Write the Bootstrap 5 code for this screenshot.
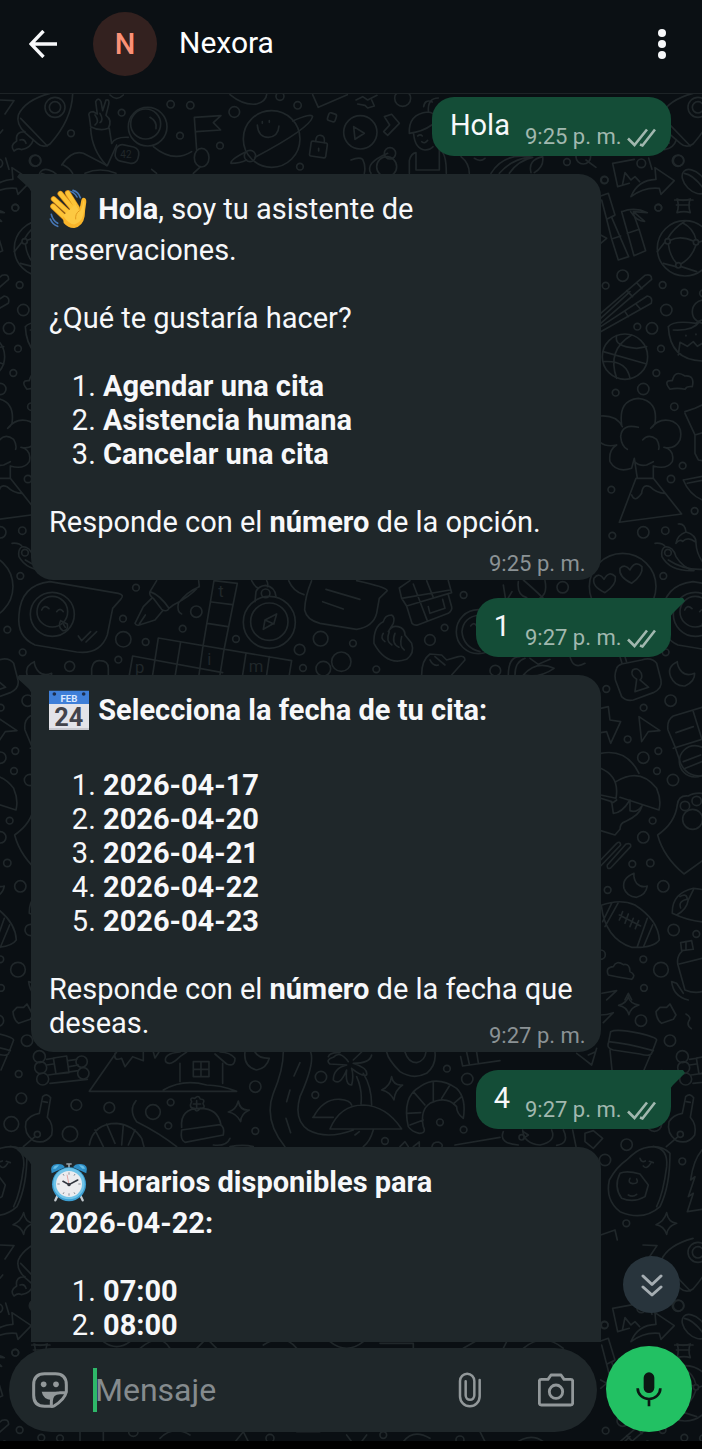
<!DOCTYPE html>
<html lang="es" data-bs-theme="dark">
<head>
<meta charset="utf-8">
<meta name="viewport" content="width=device-width, initial-scale=1">
<title>Nexora</title>
<link href="https://cdn.jsdelivr.net/npm/bootstrap@5.3.0/dist/css/bootstrap.min.css" rel="stylesheet">
<style>
  :root { --night:#0a0f13; --panel:#1f272a; --sent:#144d37; --ink:#f7f8fa; --muted:#8b9295; }
  body { font-family:Roboto,"Liberation Sans",sans-serif; font-size:29px; line-height:34px; color:var(--ink); background:var(--night); }
  .screen { min-height:100vh; isolation:isolate; }
  .wallpaper { inset:0; z-index:-1; width:100%; height:100%; fill:none; stroke:#20272a; stroke-width:5; stroke-linecap:round; stroke-linejoin:round; }
  .wallpaper text { font-family:Roboto,sans-serif; font-size:50px; fill:#20272a; stroke:none; }
  .wallpaper .patch-label { font-size:30px; }
  .topbar { background:#0b1014; border-bottom:1px solid #1d2326; padding:12px 30px 17px 29px; }
  .contact { font-size:30px; line-height:34px; font-weight:400; margin:0 0 2px; }
  .icon-btn { background:none; border:0; padding:0; color:inherit; line-height:0; flex:none; }
  .avatar { width:64px; height:64px; background:#33211f; color:#fb9176; font-size:29px; font-weight:500; margin:0 22px 0 36px; }
  .chat { padding:3px 31px 0; gap:18px; }
  .bubble { border-radius:22px; position:relative; }
  .received { background:var(--panel); width:89%; padding:15px 15px 3px 18px; }
  .sent { background:var(--sent); padding:11px 15px 6px 18px; gap:15px; }
  .tailed-start { border-top-left-radius:0; }
  .tailed-start::before { content:""; position:absolute; top:0; left:-14px; width:15px; height:19px; background:var(--panel); clip-path:polygon(2px 0,100% 0,100% 100%,12px 14px,0 3px); }
  .tailed-end { border-top-right-radius:0; }
  .tailed-end::after { content:""; position:absolute; top:0; right:-14px; width:15px; height:19px; background:var(--sent); clip-path:polygon(0 0,13px 0,15px 3px,3px 15px,0 19px); }
  .para { margin-bottom:34px; }
  .options { padding-left:54px; margin-bottom:34px; }
  .emoji { width:40px; height:40px; vertical-align:-14px; margin:0 2px 4px 0; overflow:visible; }
  .stamp { font-size:22px; line-height:26px; color:var(--muted); display:block; text-align:right; }
  .stamp-below { margin-top:12px; }
  .stamp-beside { margin-top:-17px; }
  .sent .stamp { color:#a1b8af; white-space:nowrap; padding-top:16px; }
  strong { font-weight:700; }
  .jump { right:22px; bottom:29px; width:57px; height:57px; background:#28343c; color:#a5adb2; }
  .composer { padding:4px 10px 17px 9px; gap:9px; position:relative; }
  .composer::after { content:""; position:absolute; left:0; right:0; bottom:0; height:8px; background:#000; }
  .field { background:var(--panel); height:84px; padding:0 23px; color:#92989a; min-width:0; }
  .field input { background:none; border:0; border-left:4px solid #2eb869; outline:0; height:44px; font-size:32px; line-height:44px; padding:0; flex:1 1 0; width:0; margin:0 20px 0 25px; color:var(--ink); text-indent:-2px; }
  .field input::placeholder { color:#858b8e; opacity:1; }
  .mic { width:86px; height:86px; background:#22c163; color:#0b1713; }
</style>
</head>
<body>
<div class="screen d-flex flex-column position-relative overflow-hidden">

  <svg class="wallpaper position-absolute" aria-hidden="true">
    <defs>
      <g id="doodles">
        <!-- space -->
        <g transform="scale(.3333)">
          <path d="M150 280Q75 300 55 345Q48 372 75 398L112 430Q130 446 150 432Q215 360 218 282M62 355L142 438M75 395q-30 0-25 28q-22 14-8 30q12-10 22-4q28-4 36-30M60 420q14-4 18 10"/>
          <circle cx="165" cy="322" r="30"/><circle cx="165" cy="322" r="17"/>
          <path d="M0 300L42 302L15 342M0 400L8 390"/>
          <path d="M268 350Q262 335 280 335L292 342L287 305Q295 290 303 305L308 332L318 300Q330 297 326 314L318 346Q338 360 325 385Q300 395 272 380ZM272 385Q275 450 320 497M328 385L335 430M285 345q15 20 0 30M300 340q12 20 0 28"/>
          <circle cx="443" cy="380" r="58"/><circle cx="437" cy="372" r="45"/><path d="M450 352q22 12 18 34"/>
          <path d="M335 430Q345 410 385 412M460 440Q520 490 575 455M185 495Q215 450 250 460L322 497L350 435M190 495Q210 505 218 520M255 520Q300 500 348 520"/>
          <rect x="346" y="437" width="70" height="50" rx="20" transform="rotate(12 380 462)"/><text class="patch-label" x="361" y="474">42</text>
          <path d="M590 450L583 352L663 347L640 368L662 390L588 395M580 520L602 500M455 508L470 520"/><ellipse cx="605" cy="473" rx="22" ry="28"/>
          <circle cx="815" cy="417" r="85"/><path d="M772 375Q775 412 805 412Q835 410 837 378M787 365v5M808 362v5M878 363Q935 338 938 350Q930 385 765 472M735 457Q690 480 693 490Q720 490 740 480"/><circle cx="750" cy="468" r="17"/>
          <rect x="931" y="426" width="49" height="45" rx="5" transform="rotate(8 955 448)"/><path d="M947 424Q948 404 962 406Q976 408 973 428M956 445v8"/>
          <rect x="984" y="340" width="24" height="24" rx="6" transform="rotate(18 996 352)"/>
          <path d="M690 284Q730 317 770 312Q798 304 800 284M938 284L955 322L1042 284M330 285q20 20 40 0"/>
          <circle cx="365" cy="338" r="10"/><circle cx="512" cy="313" r="11"/><circle cx="571" cy="316" r="11"/><circle cx="703" cy="336" r="16"/><circle cx="840" cy="289" r="12"/><circle cx="893" cy="316" r="11"/><circle cx="540" cy="407" r="10"/><circle cx="660" cy="437" r="10"/><circle cx="213" cy="400" r="10"/><circle cx="105" cy="482" r="17"/><circle cx="900" cy="500" r="10"/>
        </g>
        <g transform="translate(351 0) scale(.3333)">
          <circle cx="28" cy="397" r="50"/><path d="M8 380L40 400L12 418ZM15 300L35 290L50 300L78 286M20 312L42 316L50 324L70 318L62 300M100 350L122 343L145 370L110 406L98 395L116 375Z"/>
          <path d="M175 400Q172 342 230 336Q250 338 252 350M175 400Q215 395 242 375M188 402Q192 446 222 450Q240 448 246 440M200 408q8-6 14 0M212 425q10 8 18-4M195 460V510H265V450M175 520V482Q180 460 195 458M265 450Q286 455 286 520M218 320q4-24 26-14M232 334q-2-40 30-40M60 520q-20-30 50-60"/>
          <circle cx="107" cy="500" r="30"/><circle cx="117" cy="460" r="17"/><circle cx="155" cy="295" r="24"/>
          <path d="M0 480q25-10 35-2q10 20 5 42M420 520Q460 455 545 472Q500 482 475 520M445 520Q480 480 530 472M540 518Q530 480 575 470Q580 500 550 518M370 475q18 12 32 0M330 470q25 20 25 50M705 480L735 502"/>
          <circle cx="697" cy="470" r="22"/><circle cx="648" cy="486" r="10"/><circle cx="760" cy="540" r="11"/><circle cx="983" cy="482" r="16"/><circle cx="871" cy="490" r="13"/><circle cx="922" cy="623" r="10"/>
          <path d="M835 550L800 560L785 490L850 478M893 474L903 508M815 552L822 518L840 540L852 530L866 545M840 590Q860 540 915 538L912 503L970 542L930 583L925 565Q880 560 840 590ZM978 597Q995 605 1018 597Q1010 615 1018 638Q1000 632 978 638Q986 615 978 597Z"/>
          <ellipse cx="1030" cy="545" rx="44" ry="27" transform="rotate(45 1030 545)"/><path d="M1000 520q30 5 60 50"/>
        </g>
        <!-- right column, upper -->
        <g transform="translate(440 160) scale(.3333)">
          <path d="M482 108L505 100L525 165L515 172L540 230L566 290L535 300L515 237L500 178L485 120M500 178L525 165M515 237L542 228M482 225l18 10l-18 15M545 155L562 215L582 287L617 272L598 210L580 160M562 220L598 208M545 155Q585 140 622 158L580 155L614 184Q590 184 572 155"/>
          <circle cx="735" cy="265" r="83"/><circle cx="683" cy="244" r="8"/><circle cx="768" cy="247" r="8"/><circle cx="715" cy="316" r="8"/><path d="M691 241Q720 225 760 243M685 252Q690 290 710 310M722 312Q755 295 768 255M683 236Q700 205 735 184M675 246L652 275M708 320L670 310M724 320L770 335M768 239Q760 205 730 190M776 247L810 235"/>
          <path d="M482 460L615 346Q635 340 635 358L482 490M482 475L570 395M560 392L578 410M590 368L606 386M482 500L622 408Q640 412 634 430L482 515M555 455L565 470M588 432L602 448"/>
          <circle cx="555" cy="590" r="68"/><path d="M490 575L620 612M530 527Q520 560 590 565L620 560M575 525Q500 570 530 655M490 605Q560 600 570 655"/>
          <path d="M685 500Q690 600 786 603Q880 595 880 500M685 500Q700 480 768 490Q775 482 786 480Q870 480 880 500M715 585l5-38l22 12l18-14l12 14l20-12M700 510q60 4 80-26M738 526v2M768 522v2"/><circle cx="792" cy="455" r="35"/>
          <path d="M690 688Q668 660 697 662Q705 628 735 648Q765 645 757 680Q740 678 735 688Q712 682 690 688Z"/>
          <path d="M545 795Q535 720 595 715Q655 722 645 790Q640 800 632 805Q660 770 700 785Q730 800 720 840Q705 870 672 862Q705 870 697 905Q680 930 640 918L640 955M547 800Q530 765 482 768M482 848Q500 862 530 855Q505 870 510 905Q530 940 575 925L583 895L592 955M595 802Q545 790 542 830Q545 860 562 868M608 840Q625 820 650 838Q660 855 656 868M583 905Q600 920 620 915L640 905M588 955H640L725 1062L538 1087ZM575 1005Q585 1030 605 1000Q608 970 630 980Q650 1000 675 1000"/>
          <path d="M735 755L765 745L786 735M735 760L765 825L765 880L775 900L800 905M765 825l35-10M730 960L860 935Q870 1010 800 1025Q750 1010 730 960M742 970L850 948M645 1150Q668 1148 676 1160Q700 1160 708 1190Q730 1225 762 1232Q690 1235 666 1190Q662 1168 676 1160M708 1150Q712 1125 738 1116Q735 1090 715 1092M738 1116Q770 1125 768 1150Q770 1190 800 1220M708 1150q12-14 20-6q16-16 38 2"/><circle cx="684" cy="1178" r="10"/>
          <circle cx="548" cy="1280" r="100"/><path d="M495 1298Q455 1280 462 1255Q478 1235 492 1258Q508 1230 526 1250Q530 1275 495 1298ZM575 1270Q535 1250 540 1225Q555 1210 570 1230Q585 1200 606 1220Q610 1245 575 1270Z"/>
          <circle cx="548" cy="347" r="17"/><circle cx="668" cy="375" r="10"/><circle cx="733" cy="398" r="10"/><circle cx="497" cy="377" r="10"/><circle cx="679" cy="450" r="17"/><circle cx="592" cy="500" r="10"/><circle cx="636" cy="505" r="17"/><circle cx="663" cy="566" r="10"/><circle cx="649" cy="639" r="10"/><circle cx="610" cy="687" r="17"/><circle cx="527" cy="698" r="10"/><circle cx="703" cy="740" r="11"/><circle cx="728" cy="917" r="10"/><circle cx="693" cy="957" r="11"/><circle cx="514" cy="989" r="10"/><circle cx="764" cy="1053" r="10"/><circle cx="610" cy="1117" r="17"/><circle cx="676" cy="1112" r="11"/><circle cx="517" cy="1127" r="10"/><circle cx="670" cy="1248" r="10"/><circle cx="368" cy="1282" r="17"/><circle cx="494" cy="60" r="10"/><circle cx="655" cy="143" r="10"/>
        </g>
        <!-- strip below the first reply -->
        <g transform="translate(0 560) scale(.3333)">
          <circle cx="157" cy="163" r="66"/><circle cx="157" cy="155" r="46"/>
          <path d="M150 65L355 100Q375 105 362 118L338 145L322 225Q300 285 230 276L105 255Q50 230 57 165Q62 75 150 65M125 150q8-18 22-4M170 155q10-14 20 0M182 182l20 10q4 22-14 20q-16-12-6-30M190 192l6 10M235 228L245 242L272 215M258 246L290 215"/>
          <path d="M470 62L450 95Q446 105 460 115L485 148Q500 158 507 145L520 135Q570 110 598 78L596 62M450 95Q480 105 507 145M455 115L430 140L405 190Q408 198 418 195L465 180L488 152M418 192L436 165M598 80Q560 95 535 130Q530 155 545 162"/>
          <path d="M642 62L608 265L597 345M712 70L672 270L660 345M642 62L712 70M635 126L697 134M622 190L684 200M475 234L875 302L868 345M475 234L458 345M398 288L668 338M542 246L526 345M738 280L728 345M808 290L800 345M398 288L388 345"/>
          <text x="655" y="112">t</text><text x="405" y="338">p</text><text x="622" y="315">i</text><text x="746" y="335">m</text>
          <circle cx="808" cy="187" r="78"/><circle cx="808" cy="185" r="56"/><circle cx="797" cy="100" r="13"/><path d="M765 125L768 95Q775 78 797 76Q825 80 828 110M755 62q10 20 20 22M800 62q6 10 2 18M790 208L795 180L830 162L822 190ZM795 180L822 192"/>
          <path d="M935 62Q915 110 914 150Q920 180 960 190L1070 208Q1120 200 1130 160L1138 115L1162 92Q1160 82 1070 62M978 88L1080 118M968 125L1030 147M866 62Q880 95 912 104"/>
          <path d="M1198 84L1230 62M1198 84L1205 115L1220 138L1355 98L1345 62M1205 115L1350 90M1220 138L1236 190Q1245 198 1255 194L1345 160Q1358 150 1355 140L1345 104M1240 72L1262 130L1282 182M1280 62L1300 112M1285 140L1290 160L1335 145L1328 118"/>
          <path d="M1122 250Q1120 200 1150 185Q1155 165 1175 165Q1186 172 1180 190L1165 215Q1175 195 1195 200Q1215 205 1215 225L1235 250Q1245 280 1220 298Q1160 320 1122 250M1150 220q-10 15 5 25M1168 215q-12 30 8 40M1185 220q-12 30 12 42M1205 230q-8 30 8 40M1265 345Q1265 300 1290 282L1325 285L1340 300L1375 290Q1395 285 1395 300L1355 345M1290 300q10 20 25 15M1305 290l30 25"/>
          <circle cx="1435" cy="215" r="66"/><path d="M1440 165Q1390 170 1386 215Q1390 262 1440 275M1412 198q10-14 18 0M275 345V325Q280 300 300 302Q325 302 325 325V345"/>
          <circle cx="408" cy="83" r="10"/><circle cx="589" cy="155" r="17"/><circle cx="369" cy="176" r="10"/><circle cx="548" cy="206" r="10"/><circle cx="370" cy="238" r="23"/><circle cx="437" cy="246" r="10"/><circle cx="708" cy="237" r="10"/><circle cx="962" cy="236" r="22"/><circle cx="1059" cy="250" r="10"/><circle cx="899" cy="269" r="16"/><circle cx="1024" cy="305" r="29"/><circle cx="970" cy="326" r="22"/><circle cx="909" cy="324" r="10"/><circle cx="1129" cy="328" r="10"/><circle cx="1290" cy="240" r="16"/><circle cx="1334" cy="203" r="10"/><circle cx="1391" cy="105" r="10"/><circle cx="355" cy="299" r="10"/><circle cx="209" cy="319" r="15"/><circle cx="68" cy="277" r="10"/><circle cx="22" cy="209" r="10"/>
        </g>
        <!-- right column, middle -->
        <g transform="translate(440 560) scale(.3333)">
          <path d="M685 0Q730 30 786 28M190 75l8 50l18-30M235 65q-5 40 25 48M250 60q35 30 60 55M315 62q8 40-15 52M205 345Q205 290 240 290M225 345q0-40 30-50M250 345Q290 300 342 325Q300 355 250 345M270 295l25 18l35-15M390 290Q400 330 435 310M540 290l6 20M555 290l5 16"/>
          <path d="M530 325Q520 350 530 370L545 410Q560 425 580 420L640 398Q668 385 663 360L650 310Q635 290 605 300L545 312Q532 318 530 325ZM585 395L590 358Q570 345 578 330Q595 320 604 340Q608 355 600 360L626 382Z"/>
          <path d="M712 305Q680 320 692 350Q705 380 735 378Q765 365 764 340Q740 350 725 335Q712 320 712 305ZM482 445L505 440L510 480L542 485L512 550L500 515L482 518M597 470L660 512L625 515L605 545Z"/>
          <path d="M786 442L700 468Q680 480 684 510L705 560L722 610Q740 650 786 648M700 565L786 538M760 455L785 535M708 518L760 500M730 605L782 585M736 625L786 605"/><circle cx="765" cy="604" r="47"/>
          <path d="M482 580Q560 565 597 640M482 625Q540 650 528 715L482 705M528 665Q600 620 650 685Q665 720 657 750L540 712M482 715L515 725L520 760Q545 760 570 720M570 725L570 752Q590 760 606 738M530 720Q510 735 515 725M606 738Q600 765 555 785Q540 790 540 808L525 825L482 812"/>
          <path d="M482 900L530 850Q540 842 542 855L482 918M502 915L558 852Q575 848 572 860L512 924Q500 930 502 915Z"/>
          <path d="M712 735Q715 705 745 708Q760 698 786 700Q840 720 850 780Q860 840 790 900L732 942Q670 890 653 825Q705 790 712 735Z"/><circle cx="735" cy="738" r="14"/><circle cx="770" cy="723" r="14"/><circle cx="758" cy="778" r="30"/>
          <path d="M582 940Q545 955 552 985Q560 1010 590 1012Q618 1005 622 978Q605 985 590 970Q580 955 582 940ZM484 1036Q540 1015 585 1035Q655 1080 658 1140Q640 1165 575 1162Q495 1135 484 1036ZM535 1028L495 1100M515 1030L488 1085M622 1075L592 1160M638 1095L610 1162M538 1065L602 1098M548 1055L538 1080M565 1062L555 1090M580 1075L570 1100M596 1082L586 1106"/>
          <path d="M697 1060Q695 1000 760 985Q850 990 860 1080Q780 1100 697 1060ZM710 1065Q740 1050 745 1020L760 990M720 1010q20-12 22 8q-28 5-20 26M505 1245Q495 1222 520 1220Q530 1200 550 1214Q570 1210 570 1235Q590 1245 575 1258Q535 1252 505 1245ZM722 1148L755 1142L760 1168L725 1172ZM738 1145v25M728 1172Q708 1190 714 1215L735 1290Q770 1305 800 1290M718 1212L786 1195M695 1265Q700 1310 745 1320M695 1265l15 5l20 30M486 1300L530 1292L500 1320M555 1320l10-20l10 20"/>
          <circle cx="499" cy="387" r="10"/><circle cx="611" cy="443" r="10"/><circle cx="692" cy="422" r="17"/><circle cx="563" cy="538" r="10"/><circle cx="655" cy="573" r="10"/><circle cx="610" cy="593" r="17"/><circle cx="651" cy="633" r="10"/><circle cx="699" cy="660" r="17"/><circle cx="638" cy="782" r="10"/><circle cx="610" cy="832" r="17"/><circle cx="577" cy="912" r="10"/><circle cx="631" cy="909" r="11"/><circle cx="670" cy="979" r="17"/><circle cx="503" cy="990" r="10"/><circle cx="701" cy="1110" r="17"/><circle cx="769" cy="1122" r="10"/><circle cx="610" cy="1198" r="10"/><circle cx="663" cy="1229" r="22"/><circle cx="612" cy="1284" r="10"/><circle cx="166" cy="332" r="16"/><circle cx="482" cy="1184" r="14"/>
        </g>
        <!-- strip below the second reply -->
        <g transform="translate(0 1030) scale(.3333)">
          <circle cx="118" cy="80" r="18"/><circle cx="122" cy="113" r="18"/><circle cx="128" cy="147" r="18"/><circle cx="245" cy="95" r="17"/><circle cx="250" cy="130" r="17"/><path d="M140 105L160 102M140 88L165 84M145 135L235 122M150 160L262 148M160 84L200 78L207 128L168 132ZM205 92L230 88M208 110L235 105"/>
          <path d="M350 66L268 184H710Q660 165 620 165Q550 145 490 180M345 70Q340 95 365 85L375 110L398 80L430 92L430 66M460 66l5 18l12-18M540 155V100M668 160V100M540 80Q510 110 497 95Q490 70 540 66M660 66Q690 66 705 85Q705 112 680 102L645 72M580 95H627V140H580ZM603 95V140M580 118H627M540 80L560 66"/>
          <path d="M735 66Q730 110 770 120Q800 115 808 85Q775 85 765 66M850 66Q850 120 820 190Q790 270 855 350M932 66Q945 100 900 200Q880 270 925 300Q980 330 1060 300M900 98L882 138M870 180L860 215M858 265L872 308M985 80Q990 66 1020 68M1045 95Q1020 60 1000 82Q975 90 990 102L1040 105Q1000 115 1000 150Q1020 170 1040 120Q1035 165 1055 165Q1062 140 1055 115Q1085 140 1100 135Q1105 115 1060 100Q1110 100 1115 75M1060 90L1085 66M1070 140Q1088 180 1083 222M1090 130Q1115 170 1115 225M940 262Q970 205 1020 208Q1050 210 1055 225M938 262H1000M990 297Q1020 225 1090 225Q1160 228 1205 297ZM1065 315L1078 305M1120 300Q1110 335 1090 350"/>
          <path d="M1160 66Q1165 90 1200 125Q1240 150 1280 130Q1310 105 1305 66M1215 66Q1225 98 1250 98Q1275 92 1278 66M1175 140Q1180 168 1208 165Q1185 180 1182 210Q1170 185 1145 180Q1170 170 1175 140ZM715 213Q720 243 748 240Q722 252 722 275Q710 250 685 246Q708 240 715 213Z"/>
          <path d="M1225 290Q1205 200 1260 170Q1310 135 1370 175Q1400 205 1390 265Q1370 250 1370 230Q1340 195 1290 220Q1260 240 1270 290Q1280 310 1258 310Q1235 305 1225 290M1220 250L1262 248M1240 185L1275 225M1300 155L1300 215M1350 165L1325 205M1385 200L1360 222M1230 285L1270 270M1382 80L1388 108L1500 92M1400 66L1408 102M1430 66L1435 98"/>
          <path d="M545 292Q540 235 600 235Q655 235 663 285M545 300L660 284Q675 290 670 315L555 337Q540 330 545 300ZM575 215q-8-14 10-10q10-12 16 2q16 0 8 14q10 16-8 14q-12 16-18 0q-18 0-8-20M590 212v20M580 222h22"/>
          <path d="M118 250L128 200Q140 188 152 203L142 262Q162 285 155 315Q135 345 100 332Q70 310 78 275Q90 255 118 250M130 215l12 2M105 320L70 350"/><circle cx="112" cy="313" r="9"/>
          <path d="M268 345Q280 280 350 280Q400 285 425 325L432 350M285 300L310 350M320 282L345 340M370 285L365 345M405 300L385 345M408 212Q385 240 410 275Q480 310 530 350M640 345Q680 350 690 325M690 350q40-8 70 0M1365 345L1500 322M1200 350L1215 335L1225 350M1240 350l18-14v14M1296 350q2-14 20-14q14 6 10 14"/>
          <circle cx="56" cy="132" r="10"/><circle cx="64" cy="205" r="16"/><circle cx="34" cy="282" r="22"/><circle cx="210" cy="312" r="23"/><circle cx="229" cy="225" r="16"/><circle cx="328" cy="233" r="16"/><circle cx="459" cy="246" r="22"/><circle cx="512" cy="217" r="10"/><circle cx="505" cy="287" r="10"/><circle cx="766" cy="170" r="17"/><circle cx="766" cy="303" r="10"/><circle cx="963" cy="141" r="17"/><circle cx="946" cy="195" r="10"/><circle cx="1155" cy="333" r="10"/><circle cx="1320" cy="277" r="10"/><circle cx="1391" cy="299" r="10"/><circle cx="1402" cy="147" r="17"/><circle cx="1341" cy="116" r="10"/>
        </g>
        <!-- right column, lower -->
        <g transform="translate(440 1000) scale(.3333)">
          <path d="M482 45Q500 45 520 38L490 68M565-10Q570 12 597 15Q572 22 567 44Q560 20 536 16Q560 8 565-10ZM648 35L660 22L680 22L690 12L708 45L700 58L665 70Q650 60 648 35ZM738 42q18 10 8 22q-6 12 8 22M512 95Q530 85 600 100Q650 112 650 120L635 160Q630 170 600 162L520 150Q500 145 505 130ZM506 125Q560 130 640 152M510 150L516 210M630 168L612 210M410 160Q430 175 455 195L470 145M445 165l22-10"/>
          <path d="M190 395Q175 430 235 435M248 390Q250 430 300 435Q350 425 335 390M370 390Q390 430 350 436M398 390L408 440M435 400L460 392L488 415L460 445L435 425ZM250 395l15 10l-15 10"/><circle cx="245" cy="412" r="8"/>
          <path d="M610 445Q660 430 690 460Q690 560 660 620Q610 665 540 635Q495 600 508 540Q530 500 560 480Q590 450 610 445M640 440Q685 445 680 500Q670 580 650 620M600 475q4 14 16 8M610 498q10 12 22-8M628 484l12 4M540 520Q560 510 600 522L625 555L615 590Q580 610 545 595Q520 560 540 520M570 535q-8 14 8 16q20 0 12-14M565 585q14 8 25-2"/>
          <path d="M786 450Q760 480 752 540L765 530L745 590L760 580L742 635L786 628M680 638Q685 668 710 670Q682 680 680 703Q672 678 648 674Q672 664 680 638ZM482 705L525 690L532 720"/>
          <circle cx="603" cy="62" r="17"/><circle cx="690" cy="122" r="17"/><circle cx="560" cy="434" r="17"/><circle cx="495" cy="480" r="17"/><circle cx="727" cy="484" r="10"/><circle cx="559" cy="670" r="10"/>
        </g>
        <!-- tops of the doodles that peek out above and below the message field -->
        <g transform="translate(30 190) scale(.3333)">
          <path d="M5 30H60M10 45H50M220 20Q260 50 300 20M330 40Q390-10 420 40M500 40L530 10L560 40M700 30Q760-10 800 40M900 20Q950 60 1000 20M1050 25H1150V45M1300 40L1360 5M1420 40L1440 0M1480 40Q1540-10 1600 40"/>
          <path d="M150 290V340M220 290V320M390 310Q430 270 480 300M600 340L640 290L660 330M800 290H870M950 300L980 340L1010 300M1120 320Q1150 280 1200 310M1350 290L1370 330M1450 330Q1500 290 1540 320"/>
          <circle cx="90" cy="310" r="10"/><circle cx="310" cy="290" r="14"/><circle cx="720" cy="310" r="12"/><circle cx="1060" cy="300" r="10"/><circle cx="1290" cy="315" r="12"/>
        </g>
      </g>
    </defs>
    <use href="#doodles"/>
    <use href="#doodles" x="-643"/>
    <use href="#doodles" x="643"/>
    <use href="#doodles" y="1145"/>
    <use href="#doodles" x="-643" y="1145"/>
    <use href="#doodles" x="643" y="1145"/>
  </svg>

  <header class="topbar d-flex align-items-center">
    <button class="icon-btn" type="button" aria-label="Atrás">
      <svg width="28" height="28" viewBox="0 0 28 28" fill="none" stroke="currentColor" stroke-width="3.4"><path d="M28 14H2.5M14.5 1L2 14L14.5 27"/></svg>
    </button>
    <div class="avatar rounded-circle d-flex align-items-center justify-content-center flex-shrink-0">N</div>
    <h1 class="contact text-truncate flex-grow-1">Nexora</h1>
    <button class="icon-btn" type="button" aria-label="Más opciones">
      <svg width="20" height="30" viewBox="0 0 20 30" fill="currentColor"><circle cx="10" cy="4" r="4"/><circle cx="10" cy="15" r="4"/><circle cx="10" cy="26" r="4"/></svg>
    </button>
  </header>

  <div class="d-flex flex-column flex-grow-1 position-relative">
    <main class="chat d-flex flex-column flex-grow-1">
      <div class="bubble sent d-flex align-self-end">
        <span>Hola</span>
        <span class="stamp">9:25 p. m. <svg width="29" height="20" viewBox="0 0 29 20" fill="none" stroke="currentColor" stroke-width="2.6"><path d="M1 10.500L7.500 17L20 1.500M13 16.500L15.500 17.500L28 1.500"/></svg></span>
      </div>

      <div class="bubble received tailed-start">
        <p class="para"><svg class="emoji" role="img" aria-label="Mano saludando" viewBox="0 0 120 120">
            <g fill="none" stroke="#4676b5" stroke-width="5" stroke-linecap="round"><path d="M58 6Q76 8 84 24M72 4Q88 8 94 26M7 76Q11 94 26 103M4 90Q10 106 26 112"/></g>
            <g fill="none" stroke-linecap="round"><path stroke="#d98a16" stroke-width="17" d="M12 52L50 88M14 30L60 72M34 14L74 62M56 12L84 56"/><path stroke="#fdc436" stroke-width="13" d="M12 52L50 88M14 30L60 72M34 14L74 62M56 12L84 56"/></g>
            <path fill="#f9b52a" d="M42 84L82 45L90 60Q94 54 96 38Q98 24 107 27Q114 30 111 46Q108 62 107 82Q102 112 76 117Q58 118 44 102Z"/>
            <path fill="#fdc942" d="M42 80L80 45L92 68Q100 60 103 34Q108 34 106 56Q104 98 78 106Q62 108 42 80Z"/>
            <path fill="none" stroke="#e39b1d" stroke-width="3" stroke-linecap="round" d="M90 66Q78 74 80 90"/>
          </svg> <strong>Hola</strong>, soy tu asistente de reservaciones.</p>
        <p class="para">¿Qué te gustaría hacer?</p>
        <ol class="options">
          <li><strong>Agendar una cita</strong></li>
          <li><strong>Asistencia humana</strong></li>
          <li><strong>Cancelar una cita</strong></li>
        </ol>
        <p class="m-0">Responde con el <strong>número</strong> de la opción.</p>
        <span class="stamp stamp-below">9:25 p. m.</span>
      </div>

      <div class="bubble sent tailed-end d-flex align-self-end">
        <span>1</span>
        <span class="stamp">9:27 p. m. <svg width="29" height="20" viewBox="0 0 29 20" fill="none" stroke="currentColor" stroke-width="2.6"><path d="M1 10.500L7.500 17L20 1.500M13 16.500L15.500 17.500L28 1.500"/></svg></span>
      </div>

      <div class="bubble received tailed-start">
        <p class="para"><svg class="emoji" role="img" aria-label="Calendario" viewBox="0 0 120 120">
            <path fill="#e3e3e9" d="M0 38H120V120H0Z"/><path fill="#c9c9d0" d="M0 114H120V120H0Z"/><path fill="#3f7fd9" d="M0 2H120V42H0Z"/><circle cx="16" cy="12" r="5.500" fill="#1c2c4b"/><circle cx="104" cy="12" r="5.500" fill="#1c2c4b"/>
            <text x="60" y="36" text-anchor="middle" font-size="29" font-weight="700" fill="#dbe8ff">FEB</text>
            <text x="59" y="108" text-anchor="middle" font-size="76" font-weight="700" fill="#43434b">24</text>
          </svg> <strong>Selecciona la fecha de tu cita:</strong></p>
        <ol class="options">
          <li><strong>2026-04-17</strong></li>
          <li><strong>2026-04-20</strong></li>
          <li><strong>2026-04-21</strong></li>
          <li><strong>2026-04-22</strong></li>
          <li><strong>2026-04-23</strong></li>
        </ol>
        <p class="m-0">Responde con el <strong>número</strong> de la fecha que deseas.</p>
        <span class="stamp stamp-beside">9:27 p. m.</span>
      </div>

      <div class="bubble sent tailed-end d-flex align-self-end">
        <span>4</span>
        <span class="stamp">9:27 p. m. <svg width="29" height="20" viewBox="0 0 29 20" fill="none" stroke="currentColor" stroke-width="2.6"><path d="M1 10.500L7.500 17L20 1.500M13 16.500L15.500 17.500L28 1.500"/></svg></span>
      </div>

      <div class="bubble received tailed-start rounded-bottom-0 pb-0 flex-grow-1">
        <p class="para"><svg class="emoji" role="img" aria-label="Reloj despertador" viewBox="0 0 120 120">
            <path stroke="#c3c9ce" stroke-width="7" stroke-linecap="round" d="M26 100L19 115M94 100L101 115"/>
            <path stroke="#9aa4ab" stroke-width="5" d="M60 5V20M52 6H68"/>
            <path fill="#2d8ec6" d="M8 34Q0 8 24 6Q42 4 48 16ZM112 34Q120 8 96 6Q78 4 72 16Z"/>
            <path fill="#66bde6" d="M12 20Q16 8 30 10L20 20ZM108 20Q104 8 90 10L100 20Z"/>
            <circle cx="60" cy="67" r="51" fill="#3c9fd3"/><circle cx="60" cy="65" r="47" fill="#6fc3e8"/><circle cx="60" cy="66" r="39" fill="#ececef"/>
            <g stroke="#8c8f97" stroke-width="3"><path d="M60 31v7M60 94v7M25 66h7M88 66h7M42 36l3 5M78 36l-3 5M42 96l3-5M78 96l-3-5"/></g>
            <path stroke="#d9807e" stroke-width="2" d="M60 68L54 38"/><path fill="none" stroke="#33363f" stroke-width="5" stroke-linecap="round" d="M42 58L60 68L86 54"/><circle cx="60" cy="68" r="5" fill="#33363f"/>
          </svg> <strong>Horarios disponibles para <span class="text-nowrap">2026-04-22:</span></strong></p>
        <ol class="options mb-0">
          <li><strong>07:00</strong></li>
          <li><strong>08:00</strong></li>
        </ol>
      </div>
    </main>
    <button class="jump icon-btn rounded-circle position-absolute d-flex align-items-center justify-content-center" type="button" aria-label="Ir al final">
      <svg width="22" height="24" viewBox="0 0 22 24" fill="none" stroke="currentColor" stroke-width="3" stroke-linecap="round" stroke-linejoin="round"><path d="M2 3L11 11.500L20 3M2 14L11 22L20 14"/></svg>
    </button>
  </div>

  <footer class="composer d-flex align-items-end">
    <div class="field rounded-pill d-flex align-items-center flex-grow-1">
      <button class="icon-btn" type="button" aria-label="Stickers">
        <svg width="36" height="36" viewBox="0 0 108 108" fill="none" stroke="currentColor" stroke-width="9" stroke-linejoin="round"><path d="M38 5H70Q103 5 103 38V60Q98 82 66 102Q62 104 56 103H38Q5 103 5 70V38Q5 5 38 5Z"/><path d="M58 101V88Q58 62 84 62H102"/><circle cx="35" cy="37" r="8.500" fill="currentColor" stroke="none"/><circle cx="72" cy="37" r="8.500" fill="currentColor" stroke="none"/><path fill="currentColor" stroke="none" d="M29 59H78Q60 66 58 84Q34 82 29 59Z"/></svg>
      </button>
      <input type="text" placeholder="Mensaje" aria-label="Mensaje">
      <button class="icon-btn me-5" type="button" aria-label="Adjuntar">
        <svg width="24" height="36" viewBox="0 0 70 108" fill="none" stroke="currentColor" stroke-width="7.500" stroke-linecap="round"><path d="M64 24V73A29.500 30 0 0 1 5 73V27A21.500 22 0 0 1 48 27V70A12.500 13 0 0 1 22 70V28"/></svg>
      </button>
      <button class="icon-btn ms-2" type="button" aria-label="Cámara">
        <svg width="36" height="34" viewBox="0 0 108 100" fill="none" stroke="currentColor" stroke-width="8.500" stroke-linejoin="round"><path d="M10 18H30L39 5H69L78 18H98Q104 18 104 24V89Q104 95 98 95H10Q4 95 4 89V24Q4 18 10 18Z"/><circle cx="54" cy="55" r="20"/></svg>
      </button>
    </div>
    <button class="mic icon-btn rounded-circle d-flex align-items-center justify-content-center" type="button" aria-label="Grabar nota de voz">
      <svg width="26" height="36" viewBox="0 0 78 108"><path fill="currentColor" d="M23 20A16 16 0 0 1 55 20V50A16 16 0 0 1 23 50Z"/><path fill="none" stroke="currentColor" stroke-width="8" d="M5 52A34 32 0 0 0 73 52M39 84V106"/></svg>
    </button>
  </footer>
</div>
<script src="https://cdn.jsdelivr.net/npm/bootstrap@5.3.0/dist/js/bootstrap.bundle.min.js"></script>
</body>
</html>
